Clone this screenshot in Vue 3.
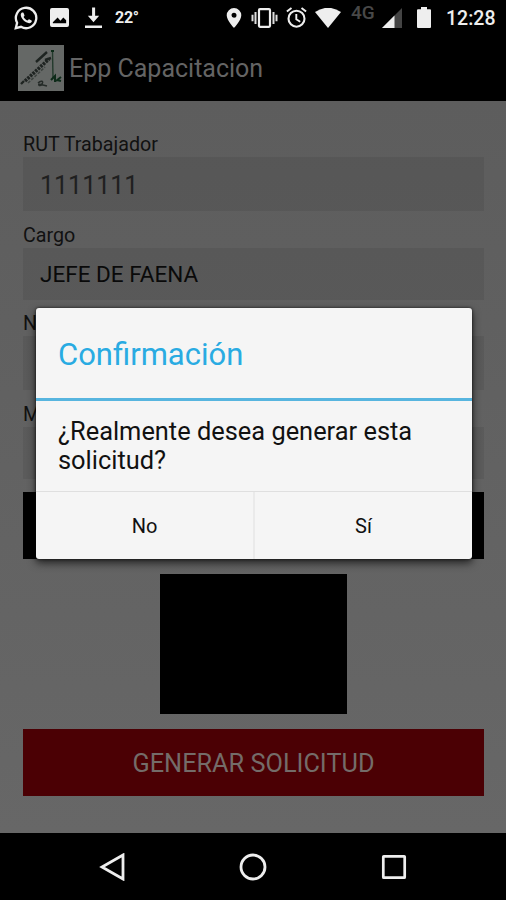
<template>
  <div class="screen">
    <header class="status-bar">
      <svg class="icon whatsapp" viewBox="0 0 24 24">
        <path d="M3.100 16.800A10.200 10.200 0 1 1 7 20.800L1.800 22.200Z" fill="none" stroke="#eee" stroke-width="2.300" />
        <path d="M8.100 6.500c-.7.3-1.500 1.300-1.300 2.800.5 3.700 4.500 7.400 8.300 7.900 1.500.1 2.700-.9 2.800-2.200 0-.5-2.500-1.800-3-1.700-.5.1-.9 1.300-1.500 1.300-1.300-.4-3.400-2.400-3.800-3.600 0-.5 1-1 .9-1.600-.2-.8-.9-2.600-1.300-2.900z" fill="#eee" />
      </svg>
      <svg class="icon picture" viewBox="0 0 20 20">
        <path fill-rule="evenodd" d="M2 0h16a2 2 0 0 1 2 2v16a2 2 0 0 1-2 2H2a2 2 0 0 1-2-2V2a2 2 0 0 1 2-2zM3 16h14v-3l-3-3-3 3.500-3-3.500-5 5z" fill="#eee" />
      </svg>
      <svg class="icon download" viewBox="0 0 18 22">
        <path d="M7.500 0h3.200v8.500H15L9 15.500 3 8.500h4.500zM0 19h18v2.600H0z" fill="#eee" />
      </svg>
      <span class="temperature">22°</span>

      <svg class="icon pin" viewBox="0 0 16 20">
        <path fill-rule="evenodd" d="M8 0a7.300 7.300 0 0 0-7.300 7.300C.7 12.600 8 20 8 20s7.300-7.400 7.300-12.700A7.300 7.300 0 0 0 8 0zm0 4.700a2.500 2.500 0 1 1 0 5 2.500 2.500 0 0 1 0-5z" fill="#eee" />
      </svg>
      <svg class="icon vibrate" viewBox="0 0 27 20">
        <rect x="8" y="1.200" width="11" height="17.600" rx="1" fill="none" stroke="#eee" stroke-width="2.200" />
        <path d="M4.500 4v12M22.500 4v12M1.500 6.800v6.400M25.500 6.800v6.400" stroke="#ddd" stroke-width="2" />
      </svg>
      <svg class="icon alarm" viewBox="0 0 21 21">
        <circle cx="10.500" cy="11.700" r="8" fill="none" stroke="#eee" stroke-width="2.100" />
        <path d="M10.300 7v5.200l3.900 2.500M.9 4.600 5.500.9M20.100 4.600 15.500.9" fill="none" stroke="#eee" stroke-width="1.900" />
      </svg>
      <svg class="icon wifi" viewBox="0 0 26 20">
        <path d="M13 20 0 4Q13-4.500 26 4z" fill="#eee" />
      </svg>
      <span class="network">4G</span>
      <svg class="icon signal" viewBox="0 0 20 20">
        <path d="M0 20 20 0v20z" fill="#444" />
        <path d="M0 20 12.500 7.500V20z" fill="#eee" />
      </svg>
      <svg class="icon battery" viewBox="0 0 14 21">
        <path d="M4 0h6v2.200h3a1 1 0 0 1 1 1V20a1 1 0 0 1-1 1H1a1 1 0 0 1-1-1V3.200a1 1 0 0 1 1-1h3z" fill="#eee" />
      </svg>
      <span class="clock">12:28</span>
    </header>

    <div class="action-bar">
      <svg class="app-logo" viewBox="0 0 46 46">
        <rect width="46" height="46" fill="#656866" />
        <path d="M7 36 31 14" stroke="#1e2321" stroke-width="3.500" stroke-dasharray="2.500 1" fill="none" />
        <path d="M10 38 27 22" stroke="#3c423f" stroke-width="1.500" stroke-dasharray="3 1.500" fill="none" />
        <path d="M18 17 29 7M3 39l3-3M27 15l6-2" stroke="#1e2421" stroke-width="2.400" fill="none" />
        <path d="M34.500 6 35 33" stroke="#233a2c" stroke-width="1.400" fill="none" />
        <path d="M33 6h3M33 35l4-4v6M38 36l5-4M39 35l4 1" stroke="#0d2b19" stroke-width="2" fill="none" />
        <path d="M20 38c3-3 6-2 4 1s-4 1-3 0l8 2" stroke="#252b28" stroke-width="1.500" fill="none" />
      </svg>
      <h1 class="app-title">Epp Capacitacion</h1>
    </div>

    <main class="form">
      <template v-for="field in fields" :key="field.label">
        <label class="field-label">{{ field.label }}</label>
        <div :class="['field-value', field.kind]">{{ field.value }}</div>
      </template>
      <div class="black-button"></div>
      <div class="photo"></div>
      <button class="submit-btn">GENERAR SOLICITUD</button>
    </main>

    <nav class="nav-bar">
      <svg class="nav-icon" viewBox="0 0 28 28">
        <path d="M25 2v24L4 14z" fill="none" stroke="#eee" stroke-width="2.800" />
      </svg>
      <svg class="nav-icon" viewBox="0 0 28 28">
        <circle cx="14" cy="14" r="12" fill="none" stroke="#eee" stroke-width="2.800" />
      </svg>
      <svg class="nav-icon" viewBox="0 0 28 28">
        <rect x="3.300" y="3.300" width="21.400" height="21.400" rx=".5" fill="none" stroke="#eee" stroke-width="2.700" />
      </svg>
    </nav>

    <div v-if="showDialog" class="dialog" role="dialog">
      <h2 class="dialog-title">Confirmación</h2>
      <p class="dialog-message">¿Realmente desea generar esta solicitud?</p>
      <div class="dialog-actions">
        <button class="dialog-btn" @click="closeDialog">No</button>
        <button class="dialog-btn" @click="closeDialog">Sí</button>
      </div>
    </div>
  </div>
</template>

<script setup>
import { ref } from 'vue'

const showDialog = ref(true)

const fields = [
  { label: 'RUT Trabajador', value: '1111111', kind: 'input' },
  { label: 'Cargo', value: 'JEFE DE FAENA', kind: 'select' },
  { label: 'N', value: '', kind: 'input' },
  { label: 'M', value: '', kind: 'select' }
]

const closeDialog = () => {
  showDialog.value = false
}
</script>

<style>
body {
  margin: 0;
  background: #000;
}
</style>

<style scoped>
.screen {
  position: relative;
  display: flex;
  flex-direction: column;
  width: 506px;
  height: 900px;
  overflow: hidden;
  background: #000;
  font-family: Roboto, sans-serif;
}

button {
  padding: 0;
  border: 0;
  font-family: inherit;
}

.status-bar {
  display: flex;
  align-items: center;
  height: 35px;
  flex-shrink: 0;
  box-sizing: border-box;
  padding-left: 14px;
  color: #eee;
}

.icon {
  display: block;
  flex-shrink: 0;
  height: 20px;
}

.whatsapp {
  width: 24px;
  height: 24px;
}

.picture {
  width: 19px;
  height: 19px;
  margin-left: 12px;
}

.download {
  width: 17px;
  height: 22px;
  margin-left: 16px;
}

.temperature {
  width: 24px;
  margin-left: 13px;
  font-size: 16px;
  font-weight: 700;
  line-height: 20px;
  letter-spacing: -0.3px;
}

.pin {
  width: 16px;
  margin-left: 87px;
}

.vibrate {
  width: 27px;
  margin-left: 9px;
}

.alarm {
  width: 21px;
  height: 21px;
  margin-left: 8px;
}

.wifi {
  width: 26px;
  margin-left: 8px;
}

.network {
  width: 25px;
  margin: 0 6px 9px 10px;
  font-size: 19px;
  font-weight: 500;
  line-height: 18px;
  color: #484848;
}

.signal {
  width: 20px;
}

.battery {
  width: 14px;
  height: 21px;
  margin-left: 15px;
}

.clock {
  margin: 2px 0 0 15px;
  font-size: 19.5px;
  font-weight: 500;
  line-height: 22px;
}

.action-bar {
  display: flex;
  align-items: center;
  height: 66px;
  flex-shrink: 0;
  padding-left: 18px;
}

.app-logo {
  width: 46px;
  height: 46px;
}

.app-title {
  margin: 2px 0 0 5px;
  font-size: 25px;
  font-weight: 400;
  line-height: 30px;
  color: #646464;
}

.form {
  display: flex;
  flex-direction: column;
  height: 732px;
  flex-shrink: 0;
  box-sizing: border-box;
  padding: 19px 22px 0 23px;
  background: linear-gradient(#5d5d5d, #676767);
}

.field-label {
  height: 24px;
  margin-top: 13px;
  font-size: 19.7px;
  line-height: 24px;
  color: #111;
}

.field-value.select + .field-label {
  margin-top: 12px;
}

.field-value {
  box-sizing: border-box;
  padding-left: 17px;
  background: rgba(0, 0, 0, 0.07);
  color: #0a0a0a;
}

.field-value.input {
  height: 54px;
  font-size: 25px;
  line-height: 57px;
  color: #202020;
}

.field-value.select {
  height: 52px;
  font-size: 22.5px;
  line-height: 53px;
}

.black-button {
  height: 67px;
  flex-shrink: 0;
  margin-top: 13px;
  background: #000;
}

.photo {
  width: 187px;
  height: 140px;
  flex-shrink: 0;
  margin: 15px auto;
  background: #000;
}

.submit-btn {
  height: 67px;
  flex-shrink: 0;
  padding-top: 1px;
  background: #4b0004;
  color: #746c69;
  font-size: 25.3px;
}

.nav-bar {
  display: flex;
  align-items: center;
  justify-content: center;
  gap: 113px;
  height: 67px;
}

.nav-icon {
  width: 28px;
  height: 28px;
}

/* confirmation dialog over the form */
.dialog {
  position: absolute;
  top: 308px;
  left: 36px;
  display: flex;
  flex-direction: column;
  width: 436px;
  height: 251px;
  border-radius: 3px;
  background: #f5f5f5;
  box-shadow: 0 0 3px rgba(0, 0, 0, 0.75), 0 4px 9px rgba(0, 0, 0, 0.65);
}

.dialog-title {
  height: 90px;
  margin: 0;
  padding-left: 22px;
  border-bottom: 3px solid #57b5df;
  color: #29abe2;
  font-size: 31px;
  font-weight: 400;
  line-height: 94px;
}

.dialog-message {
  height: 90px;
  box-sizing: border-box;
  margin: 0;
  padding: 16px 22px 0;
  color: #111;
  font-size: 25.4px;
  line-height: 29px;
}

.dialog-actions {
  display: flex;
  flex: 1;
  border-top: 1px solid #dfdfdf;
}

.dialog-btn {
  flex: 1;
  background: none;
  color: #111;
  font-size: 20px;
}

.dialog-btn + .dialog-btn {
  border-left: 2px solid #eaeaea;
}
</style>
